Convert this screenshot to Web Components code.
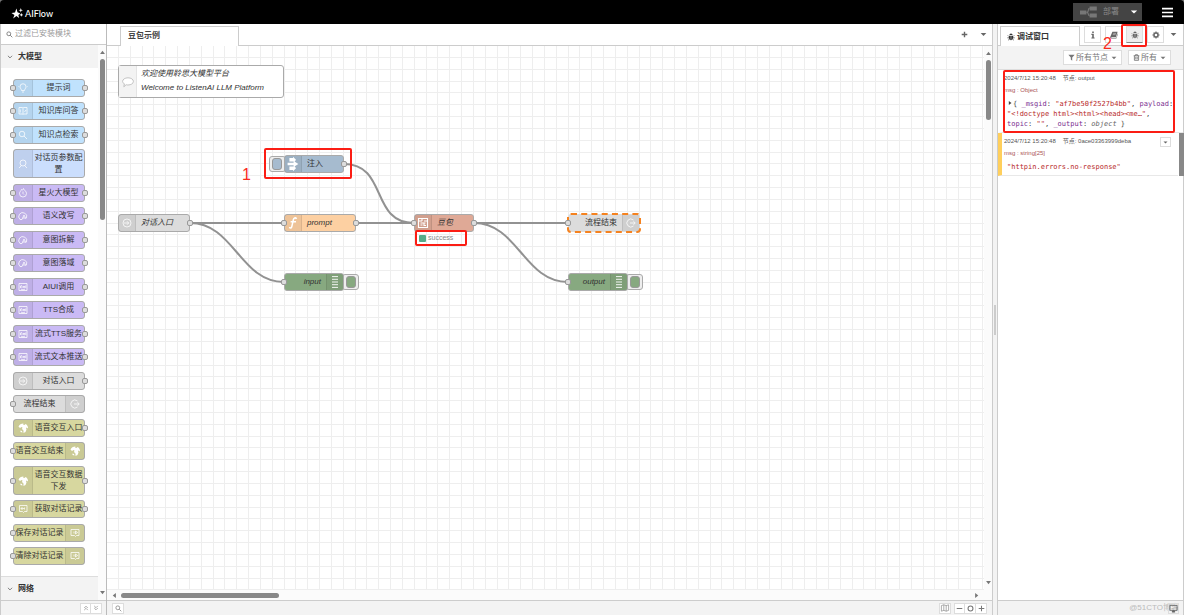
<!DOCTYPE html>
<html lang="zh-CN">
<head>
<meta charset="utf-8">
<title>AIFlow</title>
<style>
  html, body { margin: 0; height: 100%; background: #777; }
  body { font: 8px/12px "Liberation Sans", "Noto Sans CJK SC", sans-serif; color: #444; }
</style>
</head>
<body>
<aiflow-app></aiflow-app>
<script>
const ICONS = {
  logo: '<path fill="currentColor" d="M8 1l2 6.500 5 2.500-3.500 2.500L13 18l-5-3.500L2 19l2.500-6.500L-1 9l6.500-1z"/><path fill="currentColor" d="M16 0l1 3 3 1-3 1-1 3-1-3-3-1 3-1zM17 9l1 2.500 2.500 1-2.500 1-1 2.500-1-2.500-2.500-1 2.500-1z"/>',
  search: '<circle cx="8" cy="8" r="5.500"/><path d="M12 12l6 6"/>',
  chevron: '<path d="M3 6l7 7 7-7"/>',
  up2: '<path d="M4 10l6-6 6 6M4 17l6-6 6 6"/>',
  down2: '<path d="M4 3l6 6 6-6M4 10l6 6 6-6"/>',
  caret: '<path fill="currentColor" stroke="none" d="M2 6h16l-8 8z"/>',
  plus: '<path d="M10 2v16M2 10h16"/>',
  minus: '<path d="M2 10h16"/>',
  ring: '<circle cx="10" cy="10" r="7"/>',
  map: '<path d="M1 4l6-2 6 2 6-2v14l-6 2-6-2-6 2zM7 2v14M13 4v14"/>',
  menu: '<path d="M0 3h20M0 10h20M0 17h20"/>',
  deploy: '<path fill="currentColor" stroke="none" d="M0 8h8v5H0zM12 3h9v5h-9zM12 12h9v5h-9z"/><path stroke-width="1.500" d="M8 10.500c4 0 1-5 4-5M8 10.500c4 0 1 4 4 4"/>',
  bug: '<path fill="currentColor" stroke="none" d="M6 5a4 4 0 0 1 8 0zM5 7h4.500v11C7 18 5 16 5 12zM10.500 7H15v5c0 4-2 6-4.500 6z"/><path stroke-width="1.800" d="M5 9L2 6M15 9l3-3M5 12H1M15 12h4M6 15l-3 3M14 15l3 3"/>',
  info: '<path fill="currentColor" stroke="none" d="M8 1h4v4H8zM6 7h6v9h2v3H6v-3h2v-6H6z"/>',
  book: '<path fill="currentColor" stroke="none" d="M6 2h13l-4 13H4c-1 0-1 2 0 2h11l1-1 3-10 1 1-4 12H3c-3 0-3-3-2-5z"/><path stroke="#fff" stroke-width="1" d="M8 6h7M7 9h7"/>',
  gear: '<circle cx="10" cy="10" r="5" stroke-width="3.500"/><path stroke-width="3" d="M10 1v4M10 15v4M1 10h4M15 10h4M4 4l2 2M14 14l2 2M16 4l-2 2M6 14l-2 2"/>',
  filter: '<path fill="currentColor" stroke="none" d="M1 2h18l-7 8v9l-4-3v-6z"/>',
  trash: '<path stroke-width="2.500" d="M2 5h16M7 5V2h6v3M4 5v13h12V5M8 8v7M12 8v7"/>',
  monitor: '<path d="M2 3h16v11H2z"/><path fill="currentColor" d="M7 18l1-3h4l1 3z"/>',
  triangle: '<path fill="currentColor" stroke="none" d="M6 3l9 7-9 7z"/>',
  bulb: '<path d="M7 15c0-3-3-4-3-7.500a6 6 0 0 1 12 0C16 11 13 12 13 15zM8 18h4M1 7h1M18 7h1"/>',
  pages: '<path d="M2 3h7l1 1 1-1h7v13h-7l-1 1-1-1H2zM10 4v12M4.500 7v6M13 12l3-4"/>',
  person: '<circle cx="10" cy="8" r="6"/><path d="M7 13l-5 5M13 13l5 5"/>',
  fire: '<path d="M7 3c2 2 4 0 4-2 1 4 6 5 6 10a7 7 0 0 1-14 0c0-3 2-4 3-6z"/><path d="M10 7v4l2 2"/>',
  head: '<path d="M4 17A8 8 0 1 1 17 14M4 17h4M8 17l4-9 4 8M9.500 14h5"/>',
  aiui: '<path d="M2 3h16v14H2zM5 12V8l2-1 1 1v4M11 8v3l1 1 1-1V8M15.500 7v5M6 14c2 2 6 2 8 0"/>',
  enter: '<circle cx="10" cy="10" r="8"/><path d="M4 10h9M10 6.500l3.500 3.500-3.500 3.500"/>',
  leave: '<path d="M15 4a8 8 0 1 0 0 12M8 10h10M15 6.500l3.500 3.500-3.500 3.500"/>',
  globe: '<path fill="currentColor" stroke="none" d="M1 7c2-4 5-6 10-6l-1 2 3 1 2-2c4 2 5 5 5 9l-3-2-1 1 1 3-2 5-4 2v-5l-3-3 1-3-2-1-3 2z"/><path fill="currentColor" stroke="none" d="M5 15l3 1 1 3-4-1z"/>',
  talkin: '<path d="M6 3h12v12h-5l-2 2-2-2H3V3z"/><path d="M12 9H6M9 6L6 9l3 3M13 7v4"/>',
  talkout: '<path d="M2 3h16v12h-5l-2 2-2-2H2z"/><path d="M8 7v4M11 6l4 3-4 3z"/>',
  inject: '<path fill="currentColor" stroke="none" d="M4 0h6v-2l5 5-2 3H4zM1 8h10V5l8 5-8 5v-3H1zM4 14h9l2 3-5 5v-2H4z"/>',
  func: '<path stroke-width="2.500" d="M16 3c-2-3-5-1-5.500 2L8 16c-.5 3-3 3-4 1M6 8h9"/>',
  list: '<path stroke-width="1.500" d="M5 1h10M5 5.500h10M5 10h10M5 14.500h10M5 19h10"/>',
  maze: '<path stroke-width="2.200" d="M1 1h18v18H1zM1 6h7M12 6h7M5 10h10M5 14h4M12 10v5h4M8 1v5"/>',
  comment: '<path fill="#fff" d="M10 3c5 0 9 2.500 9 6s-4 6-9 6c-1 0-2 0-3-.5L3 18l1-5C2 12 1 11 1 9c0-3.500 4-6 9-6z"/>'
};

function define(name, html, ready) {
  const tpl = document.createElement('template');
  tpl.innerHTML = html;
  customElements.define(name, class extends HTMLElement {
    constructor() {
      super();
      this.attachShadow({ mode: 'open' }).append(tpl.content.cloneNode(true));
    }
    connectedCallback() { if (ready) ready(this, this.shadowRoot); }
  });
}

/* Stroke icon on a 20-unit grid; sized by --size */
define('ui-icon', `
<style>
  :host { display: inline-block; flex: none; width: var(--size, 8px); height: var(--size, 8px); white-space: normal; }
  svg { display: block; width: 100%; height: 100%; fill: none; stroke: currentColor; stroke-width: var(--stroke, 2); overflow: visible; }
</style>
<svg viewBox="0 0 20 20" aria-hidden="true"></svg>`, (host, root) => {
  root.querySelector('svg').innerHTML = ICONS[host.getAttribute('name')] || '';
});

/* Scroll bar with two arrows and a thumb */
define('scroll-bar', `
<style>
  :host { display: flex; flex-direction: column; align-items: center; width: 8px; flex: none; color: #777; background: #fbfbfb; box-sizing: border-box; padding: 4px 0; gap: 3px; }
  :host([horizontal]) { flex-direction: row; width: auto; height: 10px; padding: 0 4px; }
  ui-icon { --size: 7px; }
  i { display: block; width: 5px; height: var(--thumb); border-radius: 3px; background: #888; }
  :host([horizontal]) i { width: var(--thumb); height: 5px; }
  span { flex: 1; }
  .a { transform: rotate(-90deg); } .b { transform: rotate(90deg); }
  :host([horizontal]) .a { transform: rotate(180deg); } :host([horizontal]) .b { transform: none; }
</style>
<ui-icon class="a" name="triangle"></ui-icon><i></i><span></span><ui-icon class="b" name="triangle"></ui-icon>`);

/* Flow node: used in the palette and on the canvas */
define('flow-node', `
<style>
  :host { display: flex; position: relative; box-sizing: border-box; min-height: 18px; border: 1px solid #aaa; border-radius: 3px; background: var(--fill, #ddd); color: #333; }
  .icon { display: flex; align-items: center; justify-content: center; width: 18px; flex: none; background: rgba(0,0,0,.06); border-right: 1px solid rgba(0,0,0,.08); color: #fff; --size: 10px; --stroke: 1.5; }
  :host([placed]) .icon { width: 16px; }
  :host([flip]) { flex-direction: row-reverse; }
  :host([flip]) .icon { border-right: 0; border-left: 1px solid rgba(0,0,0,.08); }
  :host([big]) .icon { --size: 12px; }
  .label { flex: 1; align-self: center; text-align: center; line-height: 12px; white-space: nowrap; }
  :host([placed]) .label { text-align: left; padding: 0 5px; }
  :host([placed][flip]) .label { text-align: right; }
  :host([italic]) .label { font-style: italic; }
  :host([tall]) { height: 29px; }
  :host([selected]) { outline: 2px dashed #f5821f; outline-offset: -1px; border-color: transparent; }
  b { display: none; position: absolute; top: 50%; width: 6px; height: 6px; box-sizing: border-box; border: 1px solid #999; border-radius: 2px; background: #ddd; transform: translateY(-50%); z-index: 1; }
  .in { left: -4px; } .out { right: -4px; }
  :host([in]) .in, :host([out]) .out { display: block; }
</style>
<span class="icon"><ui-icon></ui-icon></span><span class="label"><slot></slot></span><b class="in"></b><b class="out"></b>`, (host, root) => {
  const icon = document.createElement('ui-icon');
  icon.setAttribute('name', host.getAttribute('icon'));
  root.querySelector('.icon').replaceChildren(icon);
  if (host.hasAttribute('fill')) host.style.setProperty('--fill', host.getAttribute('fill'));
});

/* Button attached to the side of a node */
define('node-switch', `
<style>
  :host { display: block; }
  button { display: block; width: 17px; height: 16px; padding: 0; border: 1px solid #aaa; border-radius: 3px; background: #eee; }
  i { display: block; box-sizing: border-box; width: 10px; height: 12px; margin: 0 2px; border: 1px solid #999; border-radius: 3px; background: var(--fill); }
  :host([right]) i { margin-left: 3px; }
</style>
<button aria-label="触发"><i></i></button>`);

define('call-out', `<style>:host { display: block; position: absolute; box-sizing: border-box; border: 2px solid #fb1d14; border-radius: 2px; z-index: 5; pointer-events: none; }</style>`);
define('call-number', `<style>:host { display: block; position: absolute; font-size: 16px; line-height: 16px; color: #fb2b1c; z-index: 6; }</style><slot></slot>`);

define('app-header', `
<style>
  :host { display: flex; align-items: center; height: 24px; flex: none; background: #000; color: #fff; border-radius: 4px 4px 0 0; padding: 0 11px 0 12px; box-sizing: border-box; }
  .logo { display: flex; align-items: center; gap: 2px; flex: 1; font: 500 9px/12px Lato, sans-serif; padding-top: 3px; }
  .logo ui-icon { --size: 11px; --stroke: 0; }
  button { border: 0; color: inherit; font: inherit; padding: 0; display: flex; align-items: center; }
  .deploy { background: #444; color: #888; height: 18px; gap: 7px; padding: 0 4px 0 7px; }
  .deploy .c { color: #fff; margin-left: 4px; }
  .deploy .d { --size: 16px; color: #777; }
  .menu { background: none; margin-left: 20px; --size: 11px; --stroke: 3; }
</style>
<div class="logo"><ui-icon name="logo"></ui-icon><span>AIFlow</span></div>
<button class="deploy"><ui-icon class="d" name="deploy"></ui-icon><span>部署</span><ui-icon class="c" name="caret"></ui-icon></button>
<button class="menu" aria-label="菜单"><ui-icon name="menu"></ui-icon></button>`);

define('palette-category', `
<style>
  :host { display: block; }
  header { display: flex; align-items: center; gap: 5px; height: 23px; padding-left: 6px; background: #f3f3f3; font-weight: bold; color: #333; --size: 6px; }
  header.line { border-top: 1px solid #ddd; }
  .list { display: flex; flex-direction: column; padding: 11px 13px 11px 12px; }
</style>
<header><ui-icon name="chevron"></ui-icon><span></span></header><div class="list"><slot></slot></div>`, (host, root) => {
  root.querySelector('span').textContent = host.getAttribute('title-text');
  if (!host.children.length) {
    root.querySelector('.list').remove();
    root.querySelector('header').className = 'line';
  }
});

define('node-palette', `
<style>
  :host { display: flex; flex-direction: column; width: 107px; flex: none; box-sizing: border-box; border-right: 1px solid #bbb; border-left: 1px solid #ccc; background: #fff; }
  label { display: flex; align-items: center; gap: 2px; height: 21px; box-sizing: border-box; padding-left: 5px; border-bottom: 1px solid #ccc; color: #777; --size: 7px; --stroke: 2.5; }
  input { flex: 1; min-width: 0; border: 0; padding: 0; font: inherit; outline: 0; background: none; }
  input::placeholder { color: #999; }
  .body { flex: 1; display: flex; min-height: 0; }
  .scroll { flex: 1; overflow: hidden; display: flex; flex-direction: column; justify-content: space-between; }
  flow-node { margin-bottom: 5px; }
  flow-node:nth-child(even) { margin-bottom: 6px; }
  flow-node:last-child { margin-bottom: 0; }
  footer { display: flex; justify-content: flex-end; align-items: center; height: 15px; box-sizing: border-box; padding-right: 4px; border-top: 1px solid #ccc; background: #f3f3f3; }
  button { width: 11px; height: 11px; padding: 0; border: 1px solid #ddd; background: #fff; color: #777; display: grid; place-items: center; --size: 6px; }
  button + button { border-left: 0; }
  scroll-bar { --thumb: 161px; }
</style>
<label><ui-icon name="search"></ui-icon><input placeholder="过滤已安装模块" aria-label="过滤已安装模块"></label>
<div class="body">
  <div class="scroll">
    <palette-category title-text="大模型">
      <flow-node in out icon="bulb" fill="#c0e2fd">提示词</flow-node>
      <flow-node in out icon="pages" fill="#c0e2fd">知识库问答</flow-node>
      <flow-node in out icon="search" fill="#c0e2fd">知识点检索</flow-node>
      <flow-node tall icon="person" fill="#cbdefd">对话页参数配<br>置</flow-node>
      <flow-node in out icon="fire" fill="#cabaf5">星火大模型</flow-node>
      <flow-node in out icon="head" fill="#cabaf5">语义改写</flow-node>
      <flow-node in out icon="head" fill="#cabaf5">意图拆解</flow-node>
      <flow-node in out icon="head" fill="#cabaf5">意图落域</flow-node>
      <flow-node in out icon="aiui" fill="#cabaf5">AIUI调用</flow-node>
      <flow-node in out icon="aiui" fill="#cabaf5">TTS合成</flow-node>
      <flow-node in out icon="aiui" fill="#cabaf5">流式TTS服务</flow-node>
      <flow-node in out icon="aiui" fill="#cabaf5">流式文本推送</flow-node>
      <flow-node out icon="enter" fill="#dcdcdc">对话入口</flow-node>
      <flow-node in flip icon="leave" fill="#dcdcdc">流程结束</flow-node>
      <flow-node out icon="globe" fill="#d7d79f">语音交互入口</flow-node>
      <flow-node in flip icon="globe" fill="#d7d79f">语音交互结束</flow-node>
      <flow-node tall in out icon="globe" fill="#d7d79f">语音交互数据<br>下发</flow-node>
      <flow-node in out icon="talkin" fill="#d7d79f">获取对话记录</flow-node>
      <flow-node in flip icon="talkout" fill="#d7d79f">保存对话记录</flow-node>
      <flow-node in flip icon="talkout" fill="#d7d79f">清除对话记录</flow-node>
    </palette-category>
    <palette-category title-text="网络"></palette-category>
  </div>
  <scroll-bar></scroll-bar>
</div>
<footer><button aria-label="全部收起"><ui-icon name="up2"></ui-icon></button><button aria-label="全部展开"><ui-icon name="down2"></ui-icon></button></footer>`);

/* Free canvas: nodes sit at their own coordinates, wires run between ports */
define('flow-canvas', `
<style>
  :host { display: block; position: relative; overflow: hidden; background: #fff; }
  svg { position: absolute; inset: 0; width: 100%; height: 100%; }
  .wire { fill: none; stroke: #929292; stroke-width: 2; }
  .grid { fill: none; stroke: #eee; stroke-width: 1; }
  flow-node, node-switch, .note, .status { position: absolute; }
  .note { display: flex; box-sizing: border-box; left: 11px; top: 19px; width: 166px; height: 33px; border: 1px solid #aaa; border-radius: 3px; background: #fff; font-style: italic; color: #333; line-height: 14px; white-space: nowrap; }
  .note span { display: grid; place-items: center; width: 17px; background: #f3f3f3; border-right: 1px solid #e4e4e4; color: #bbb; --size: 12px; --stroke: 1.5; }
  .note p { margin: 0; padding: 1px 4px; }
  .status { left: 312px; top: 186px; display: flex; align-items: center; gap: 2px; font-size: 7px; color: #888; }
  .status i { width: 7px; height: 7px; border-radius: 1px; background: #5a8; }
</style>
<svg>
  <defs><pattern id="g" width="71" height="71" patternUnits="userSpaceOnUse" x="-1" y="-1"><path class="grid" d="M.5 0v71M12.500 0v71M24.500 0v71M36.500 0v71M47.500 0v71M59.500 0v71M0 .5h71M0 12.500h71M0 24.500h71M0 36.500h71M0 47.500h71M0 59.500h71"/></pattern></defs>
  <rect width="100%" height="100%" fill="url(#g)"/>
  <path class="wire" d="M83 177H177M249 177H307M367 177H461M83 177C127 177 133 236 177 236M237 118C281 118 263 177 307 177M367 177C411 177 417 236 461 236"/>
</svg>
<div class="note"><span><ui-icon name="comment"></ui-icon></span><p>欢迎使用聆思大模型平台<br>Welcome to ListenAI LLM Platform</p></div>
<node-switch style="left:162px;top:110px;--fill:#a6bbcf"></node-switch>
<flow-node placed out big icon="inject" fill="#a6bbcf" style="left:177px;top:109px;width:60px">注入</flow-node>
<flow-node placed italic out icon="enter" fill="#dcdcdc" style="left:11px;top:168px;width:72px">对话入口</flow-node>
<flow-node placed italic in out big icon="func" fill="#fdd0a2" style="left:177px;top:168px;width:72px">prompt</flow-node>
<node-switch right style="left:235px;top:228px;--fill:#87a980"></node-switch>
<flow-node placed italic flip in big icon="list" fill="#87a980" style="left:177px;top:227px;width:60px">input</flow-node>
<flow-node placed italic in out icon="maze" fill="#dfa996" style="left:307px;top:168px;width:60px">豆包</flow-node>
<flow-node placed flip in selected icon="leave" fill="#dcdcdc" style="left:461px;top:168px;width:72px">流程结束</flow-node>
<node-switch right style="left:519px;top:228px;--fill:#87a980"></node-switch>
<flow-node placed italic flip in big icon="list" fill="#87a980" style="left:461px;top:227px;width:60px">output</flow-node>
<div class="status"><i></i><span>success</span></div>
<call-out style="left:157px;top:102px;width:88px;height:31px"></call-out>
<call-number style="left:135px;top:121px">1</call-number>
<call-out style="left:308px;top:184px;width:52px;height:16px"></call-out>`);

define('flow-workspace', `
<style>
  :host { display: grid; grid-template: 22px 1fr 10px 15px / 1fr 8px; flex: 1; min-width: 0; background: #fff; }
  nav { grid-column: 1 / 3; display: flex; align-items: center; border-bottom: 1px solid #ccc; padding: 0 5px 0 13px; gap: 12px; color: #666; --size: 7px; --stroke: 4; }
  nav a { align-self: stretch; box-sizing: border-box; width: 119px; margin: 2px auto -1px 0; border: 1px solid #ccc; border-bottom: 0; background: #fff; color: #444; font-weight: bold; line-height: 18px; padding-left: 7px; text-decoration: none; }
  nav button, footer button { display: grid; place-items: center; padding: 0; border: 0; background: none; color: inherit; }
  .v { --thumb: 60px; }
  .h { --thumb: 158px; }
  .corner { background: #fbfbfb; }
  footer { grid-column: 1 / 3; display: flex; align-items: center; padding: 0 5px; border-top: 1px solid #ccc; background: #f3f3f3; color: #777; --size: 7px; }
  footer button { width: 12px; height: 11px; border: 1px solid #ddd; background: #fff; }
  footer .map { margin: 0 3px 0 auto; --size: 8px; --stroke: 1.5; }
  footer .z { width: 11px; --stroke: 3; }
  footer .z + .z { border-left: 0; }
</style>
<nav><a href="#flow">豆包示例</a><button aria-label="添加流程"><ui-icon name="plus"></ui-icon></button><button aria-label="流程列表"><ui-icon name="caret"></ui-icon></button></nav>
<flow-canvas></flow-canvas><scroll-bar class="v"></scroll-bar>
<scroll-bar class="h" horizontal></scroll-bar><div class="corner"></div>
<footer><button aria-label="搜索"><ui-icon name="search"></ui-icon></button><button class="map" aria-label="地图"><ui-icon name="map"></ui-icon></button><button class="z" aria-label="缩小"><ui-icon name="minus"></ui-icon></button><button class="z" aria-label="重置"><ui-icon name="ring"></ui-icon></button><button class="z" aria-label="放大"><ui-icon name="plus"></ui-icon></button></footer>`);

define('side-splitter', `
<style>
  :host { display: grid; place-items: center; width: 6px; flex: none; box-sizing: border-box; background: #f3f3f3; border: solid #ccc; border-width: 0 1px; }
  i { width: 2px; height: 30px; background: #ccc; }
</style><i></i>`);

define('debug-message', `
<style>
  :host { display: block; position: relative; box-sizing: border-box; padding: 2px 9px 4px 2px; border-left: 4px solid transparent; border-bottom: 1px solid #e8e8e8; }
  :host([warn]) { border-left-color: #ffcf5c; }
  .meta { display: flex; gap: 7px; font-size: 6px; line-height: 12px; color: #555; white-space: nowrap; }
  .prop { font-size: 6px; line-height: 12px; color: #a55; }
  .value { padding: 3px 0 0 3px; font: 7px/10px "DejaVu Sans Mono", monospace; color: #444; white-space: pre; overflow: hidden; }
</style>
<div class="meta"><slot name="time"></slot><slot name="node"></slot></div>
<div class="prop"><slot name="prop"></slot></div>
<div class="value"><slot></slot></div><slot name="extra"></slot>`);

define('debug-sidebar', `
<style>
  :host { display: flex; flex-direction: column; width: 186px; flex: none; box-sizing: border-box; border-right: 1px solid #ccc; background: #fff; position: relative; }
  button { display: flex; align-items: center; justify-content: center; box-sizing: border-box; padding: 0; border: 1px solid #ddd; background: #fff; color: #666; font: inherit; }
  .tabs { display: flex; align-items: center; height: 22px; box-sizing: border-box; padding-left: 2px; border-bottom: 1px solid #ccc; gap: 4px; background: #fff; }
  .tabs a { display: flex; align-items: center; gap: 2px; align-self: stretch; box-sizing: border-box; width: 80px; margin: 2px 0 -1px; padding-left: 6px; border: 1px solid #ccc; border-bottom: 0; background: #fff; color: #333; font-weight: bold; text-decoration: none; }
  .tabs button { width: 17px; height: 17px; }
  .tabs .on { background: #eee; border-bottom-color: #888; }
  .tabs button.more { width: 10px; border: 0; --size: 7px; }
  .tools { display: flex; justify-content: flex-end; align-items: center; gap: 6px; height: 24px; box-sizing: border-box; padding-right: 12px; border-bottom: 1px solid #ddd; background: #f3f3f3; }
  .tools button { height: 15px; gap: 1px; padding: 0 4px; --size: 7px; color: #777; }
  .tools .c { margin-left: 2px; --size: 6px; }
  .log { flex: 1; position: relative; min-height: 0; }
  .log::after { content: ""; position: absolute; right: -1px; top: 63px; width: 5px; height: 43px; background: #888; }
  .first { height: 63px; } .second { height: 43px; margin-right: 5px; }
  em { color: #666; }
  .k { color: #792e90; } .s { color: #b72828; }
  .twist { --size: 6px; }
  .fold { position: absolute; right: 7px; top: 4px; width: 11px; height: 10px; --size: 5px; }
  footer { display: flex; align-items: center; justify-content: flex-end; height: 15px; box-sizing: border-box; padding-right: 4px; border-top: 1px solid #ccc; background: #f3f3f3; color: #bbb; }
  footer span { margin-right: -11px; }
  footer button { width: 11px; height: 11px; --size: 9px; background: none; }
</style>
<div class="tabs">
  <a href="#debug"><ui-icon name="bug"></ui-icon>调试窗口</a>
  <button aria-label="信息"><ui-icon name="info"></ui-icon></button><button aria-label="帮助"><ui-icon name="book"></ui-icon></button><button class="on" aria-label="调试"><ui-icon name="bug"></ui-icon></button><button aria-label="配置"><ui-icon name="gear"></ui-icon></button><button class="more" aria-label="更多"><ui-icon name="caret"></ui-icon></button>
</div>
<div class="tools">
  <button><ui-icon name="filter"></ui-icon>所有节点<ui-icon class="c" name="caret"></ui-icon></button>
  <button><ui-icon name="trash"></ui-icon>所有<ui-icon class="c" name="caret"></ui-icon></button>
</div>
<div class="log">
  <debug-message class="first"><span slot="time">2024/7/12 15:20:48</span><span slot="node">节点: output</span><span slot="prop">msg : Object</span><ui-icon class="twist" name="triangle"></ui-icon>{ <span class="k">_msgid</span>: <span class="s">"af7be50f2527b4bb"</span>, <span class="k">payload</span>:<br><span class="s">"&lt;!doctype html&gt;&lt;html&gt;&lt;head&gt;&lt;me…"</span>,<br><span class="k">topic</span>: <span class="s">""</span>, <span class="k">_output</span>: <em>object</em> }</debug-message>
  <debug-message class="second" warn><span slot="time">2024/7/12 15:20:48</span><span slot="node">节点: 0ace03363999deba</span><span slot="prop">msg : string[25]</span><span class="s">"httpin.errors.no-response"</span><button slot="extra" class="fold" aria-label="更多"><ui-icon name="caret"></ui-icon></button></debug-message>
  <call-out style="left:5px;top:0;right:8px;height:63px"></call-out>
</div>
<footer><span>@51CTO博客</span><button aria-label="桌面"><ui-icon name="monitor"></ui-icon></button></footer>
<call-out style="right:36px;top:0;width:26px;height:23px"></call-out>
<call-number style="right:71px;top:12px">2</call-number>`);

define('aiflow-app', `
<style>
  :host { display: flex; flex-direction: column; height: 100vh; }
  main { flex: 1; display: flex; min-height: 0; }
</style>
<app-header></app-header>
<main><node-palette></node-palette><flow-workspace></flow-workspace><side-splitter></side-splitter><debug-sidebar></debug-sidebar></main>`);
</script>
</body>
</html>
